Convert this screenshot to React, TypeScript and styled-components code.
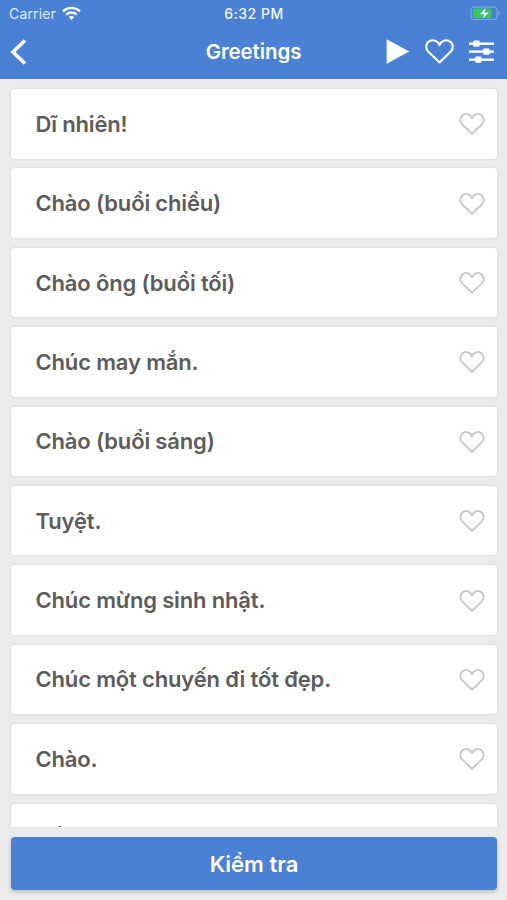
import React from "react";
import styled, { createGlobalStyle } from "styled-components";

const Global = createGlobalStyle`
  * { box-sizing: border-box; }
  body { margin: 0; background: #ebebeb; font-family: Inter, "Liberation Sans", sans-serif; }
`;

const Screen = styled.div`
  width: 507px;
  height: 900px;
  display: flex;
  flex-direction: column;
  overflow: hidden;
  background: #ebebeb;
`;

const Header = styled.header`
  height: 79px;
  flex: none;
  background: #4a81d4;
  color: #fff;
`;

const StatusBar = styled.div`
  height: 27px;
  padding: 0 7px 0 9px;
  display: grid;
  grid-template-columns: 1fr auto 1fr;
  align-items: center;
  font-size: 14px;
`;

const Carrier = styled.div`
  display: flex;
  align-items: center;
  gap: 6px;
  color: #dfebfb;
  letter-spacing: 0.15px;
`;

const Clock = styled.div`
  font-weight: 500;
  letter-spacing: 0.5px;
  color: #f1f6fd;
  margin-right: 1px;
`;

const Power = styled.div`
  display: flex;
  justify-content: flex-end;
`;

const NavBar = styled.div`
  height: 49px;
  padding: 0 13px 0 9px;
  display: grid;
  grid-template-columns: 1fr auto 1fr;
  align-items: center;
`;

const Title = styled.h1`
  margin: 0 0 0 4px;
  font-size: 20.5px;
  font-weight: 600;
  letter-spacing: -0.1px;
`;

const Actions = styled.div`
  display: flex;
  align-items: center;
  justify-content: flex-end;
  gap: 15px;
`;

const IconButton = styled.button`
  border: 0;
  padding: 0;
  background: none;
  color: inherit;
  display: flex;
`;

const List = styled.main`
  height: 748px;
  flex: none;
  overflow: hidden;
  padding: 10px 10px 0 11px;
  display: flex;
  flex-direction: column;
  gap: 9.9px;
`;

const Card = styled.article`
  height: 69.5px;
  flex: none;
  padding: 0 12px 0 24.5px;
  display: flex;
  align-items: center;
  justify-content: space-between;
  background: #fff;
  border-radius: 4px;
  box-shadow: 0 0 2px 1px rgba(0, 0, 0, 0.05);
`;

const Phrase = styled.span`
  color: #5c5c5c;
  font-size: 22px;
  font-weight: 600;
  letter-spacing: -0.16px;
  white-space: nowrap;
`;

const Footer = styled.footer`
  flex: 1;
  padding: 10px 10px 0 11px;
`;

const TestButton = styled.button`
  width: 100%;
  height: 53px;
  padding: 0;
  border: 0;
  border-radius: 4px;
  background: #4a81d4;
  color: #fff;
  font: 600 22px Inter, "Liberation Sans", sans-serif;
  letter-spacing: 0;
  box-shadow: 0 2px 4px rgba(0, 0, 0, 0.2);
`;

const Heart = ({ size, stroke }: { size: [number, number]; stroke: number }) => (
  <svg width={size[0]} height={size[1]} viewBox="0 0 29 25" fill="none" stroke="currentColor" strokeWidth={stroke} strokeLinejoin="round">
    <path d="M14.500 23.500 3.200 12.600C.600 9.900.600 5.700 3.200 3.100c2.600-2.500 6.700-2.500 9.200 0 .900.900 1.700 1.900 2.100 3 .400-1.100 1.200-2.100 2.100-3 2.500-2.500 6.600-2.500 9.200 0 2.600 2.600 2.600 6.800 0 9.500Z" />
  </svg>
);

const CardHeart = styled(IconButton)`
  color: #c9c9c9;
  margin-top: 1px;
`;

const Wifi = () => (
  <svg width="19" height="15" viewBox="0 0 19 15" fill="none" stroke="#fff" strokeWidth="2.300">
    <path d="M1 5.300C5.900.700 13.100.700 18 5.300" />
    <path d="M4.200 8.600c3-2.800 7.600-2.800 10.600 0" />
    <path d="M6.600 11c1.700-1.500 4.100-1.500 5.800 0l-2.900 3Z" fill="#fff" stroke="none" />
  </svg>
);

const Battery = () => (
  <svg width="30" height="15" viewBox="0 0 30 15" fill="none">
    <rect x="1" y="1" width="26" height="12.500" rx="3" stroke="#86a9e2" />
    <path d="M28.500 5.200c1.700.700 1.700 3.300 0 4Z" fill="#86a9e2" />
    <rect x="2.800" y="2.500" width="18.500" height="9.500" rx="1.500" fill="#33cc5c" />
    <path d="M15.800 1.500 9.800 8.200h4.200L12.300 13.500l6.800-7.200h-4.300Z" fill="#fff" stroke="#4a81d4" strokeWidth=".4" />
  </svg>
);

const Sliders = () => (
  <svg width="25" height="25" viewBox="0 0 25 25" fill="#fff">
    <rect y="3.500" width="25" height="2.400" />
    <rect y="11.400" width="25" height="2.400" />
    <rect y="19.500" width="25" height="2.400" />
    <rect x="4.300" y="1.600" width="6.200" height="6.200" rx="1" />
    <rect x="14.300" y="9.500" width="6.200" height="6.200" rx="1" />
    <rect x="6.200" y="17.600" width="6.200" height="6.200" rx="1" />
  </svg>
);

const phrases = [
  "Dĩ nhiên!",
  "Chào (buổi chiều)",
  "Chào ông (buổi tối)",
  "Chúc may mắn.",
  "Chào (buổi sáng)",
  "Tuyệt.",
  "Chúc mừng sinh nhật.",
  "Chúc một chuyến đi tốt đẹp.",
  "Chào.",
  "Rất vui được gặp bạn.",
];

export default function App() {
  return (
    <Screen>
      <Global />
      <Header>
        <StatusBar>
          <Carrier>
            Carrier
            <Wifi />
          </Carrier>
          <Clock>6:32 PM</Clock>
          <Power>
            <Battery />
          </Power>
        </StatusBar>
        <NavBar>
          <IconButton aria-label="Back">
            <svg width="18" height="26" viewBox="0 0 18 26" fill="none" stroke="#fff" strokeWidth="3.600">
              <path d="M16 1.500 4 13l12 11.500" />
            </svg>
          </IconButton>
          <Title>Greetings</Title>
          <Actions>
            <IconButton aria-label="Play">
              <svg width="24" height="25" viewBox="0 0 24 25" fill="#fff">
                <path d="M.6.300 23.300 12.500.6 24.700Z" />
              </svg>
            </IconButton>
            <IconButton aria-label="Favourites">
              <Heart size={[29, 25]} stroke={2.1} />
            </IconButton>
            <IconButton aria-label="Settings">
              <Sliders />
            </IconButton>
          </Actions>
        </NavBar>
      </Header>
      <List>
        {phrases.map((phrase) => (
          <Card key={phrase}>
            <Phrase>{phrase}</Phrase>
            <CardHeart aria-label="Add to favourites">
              <Heart size={[26, 22]} stroke={2.2} />
            </CardHeart>
          </Card>
        ))}
      </List>
      <Footer>
        <TestButton>Kiểm tra</TestButton>
      </Footer>
    </Screen>
  );
}
